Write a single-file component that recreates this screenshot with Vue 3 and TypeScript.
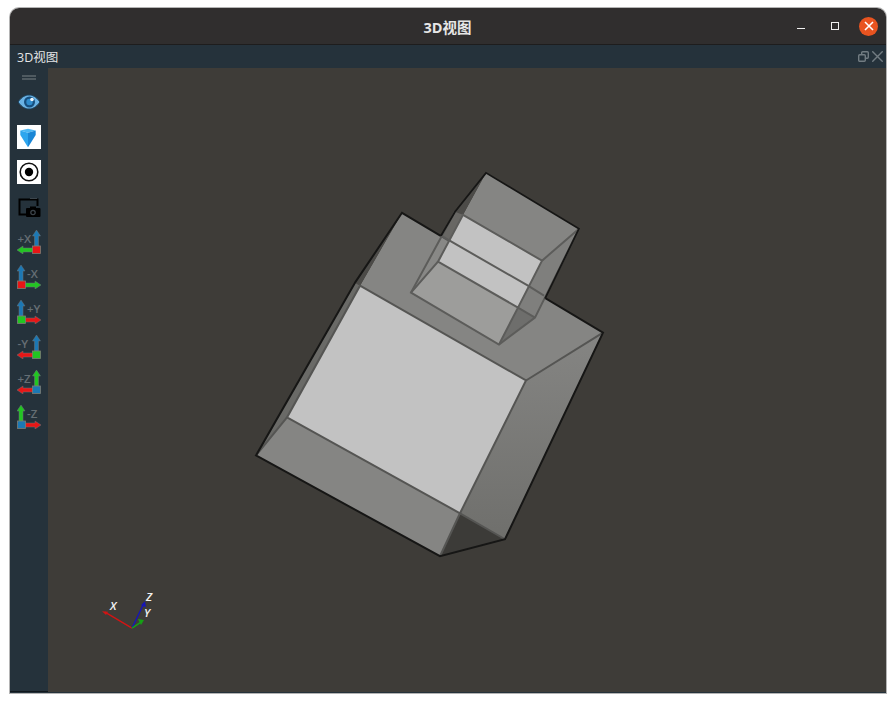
<template>
  <div class="page">
    <div class="window">
      <header class="titlebar">
        <span class="title">3D视图</span>
        <div class="win-buttons">
          <button class="win-btn"><span class="min"></span></button>
          <button class="win-btn"><span class="max"></span></button>
          <button class="win-close">
            <svg width="10" height="10" viewBox="0 0 10 10">
              <path d="M1 1L9 9M9 1L1 9" stroke="#fff" stroke-width="1.6" />
            </svg>
          </button>
        </div>
      </header>
      <div class="dock-title">
        <span>3D视图</span>
        <div class="dock-buttons">
          <svg width="11" height="11" viewBox="0 0 11 11" fill="none" stroke="#727c82" stroke-width="1.4">
            <rect x="0.7" y="3.7" width="6.6" height="6.6" rx="1" />
            <path d="M3.7 3.4V1.7a1 1 0 0 1 1-1h4.6a1 1 0 0 1 1 1v4.6a1 1 0 0 1-1 1H7.6" />
          </svg>
          <svg width="11" height="11" viewBox="0 0 11 11" stroke="#727c82" stroke-width="1.4">
            <path d="M0.3 0.3L10.7 10.7M10.7 0.3L0.3 10.7" />
          </svg>
        </div>
      </div>
      <div class="body">
        <aside class="toolbar">
          <div class="grip"></div>
          <svg class="icon" viewBox="0 0 24 24">
            <path d="M1 12C5 6.5 8.5 5 12 5s7 1.5 11 7c-4 5.500-7.500 7-11 7s-7-1.500-11-7z" fill="#6ab2e4" stroke="#1c3f58" stroke-width="1" />
            <circle cx="12.500" cy="12" r="5.500" fill="#174f7e" />
            <circle cx="12.500" cy="12" r="3.200" fill="#2f8ccd" />
            <circle cx="15" cy="9.500" r="1.800" fill="#eef5fa" />
          </svg>
          <svg class="icon white" viewBox="0 0 24 24">
            <path d="M3.300 5.500L11 3.800l7.700 1.700L11 7.800z" fill="#4cb8f4" />
            <path d="M3.300 5.500L11 7.800v14.500L3.300 10z" fill="#2ea6ee" />
            <path d="M18.700 5.500L11 7.800v14.500L18.700 10z" fill="#1a87d6" />
          </svg>
          <svg class="icon white" viewBox="0 0 24 24">
            <circle cx="12" cy="12" r="8.800" fill="none" stroke="#111" stroke-width="1.600" />
            <circle cx="12" cy="12" r="4.200" fill="#000" />
          </svg>
          <svg class="icon" viewBox="0 0 24 24">
            <path d="M9 19.500H2.500V4.500h18V11" fill="none" stroke="#000" stroke-width="2" />
            <path d="M13 3.500h7" stroke="#3c464d" stroke-width="1" />
            <rect x="9" y="13" width="14.500" height="9" rx="1" fill="#000" />
            <rect x="13" y="11.500" width="6" height="2" fill="#000" />
            <circle cx="16" cy="17.500" r="2.800" fill="#3b4349" />
            <circle cx="16" cy="17.500" r="1.500" fill="#000" />
          </svg>
          <svg v-for="v in views" :key="v.label" class="icon" viewBox="0 0 24 24">
            <text :x="v.left ? 0.500 : 10" y="12.500" class="view-label">{{ v.label }}</text>
            <path :d="upArrow(v.left ? 19.500 : 4)" :fill="v.up" stroke="#6f7678" stroke-width="0.500" />
            <path :d="v.left ? leftArrow : rightArrow" :fill="v.side" stroke="#6f7678" stroke-width="0.500" />
            <rect :x="v.left ? 15.500 : 0.500" y="16" width="8" height="7.500" :fill="v.box" stroke="#7d7d74" stroke-width="0.800" />
          </svg>
        </aside>
        <main class="viewport">
          <svg class="scene" viewBox="48 68 838 625" preserveAspectRatio="none">
            <defs>
              <linearGradient id="sideFace" x1="0" y1="0" x2="0" y2="1">
                <stop offset="0" stop-color="#858583" />
                <stop offset="1" stop-color="#6f6f6c" />
              </linearGradient>
            </defs>
            <!-- big box -->
            <polygon points="402,213 603,333 526,381 360,286" fill="#858583" />
            <polygon points="402,213 360,286 355,283" fill="#4c4b48" />
            <polygon points="355,283 360,286 287,418 256,456" fill="#6a6a67" />
            <polygon points="360,286 526,381 460,514 287,418" fill="#c2c2c2" />
            <polygon points="603,333 526,381 460,514 505,540" fill="url(#sideFace)" />
            <polygon points="287,418 460,514 440,557 256,456" fill="#858583" />
            <polygon points="460,514 505,540 440,557" fill="#3c3b38" />
            <g fill="none" stroke="#555553" stroke-width="2">
              <path d="M360,286L526,381L460,514L287,418Z" />
              <path d="M526,381L603,333M460,514L440,557M460,514L505,540M287,418L256,456" />
            </g>
            <path d="M355,283L402,213L603,333L505,540L440,557L256,456Z" fill="none" stroke="#161615" stroke-width="2" />
            <!-- small box, see-through where it crosses the big one -->
            <polygon points="463,215 542,261 518,308 438,262" fill="#c2c2c2" />
            <polygon points="486,173 579,229 542,261 463,215" fill="#858583" />
            <polygon points="455,212 486,173 463,215" fill="#4c4b48" />
            <polygon points="438,262 518,308 499,345 411,293" fill="#9d9d9b" />
            <polygon points="542,261 579,229 535,318 518,308" fill="#7f7f7d" />
            <polygon points="455,212 463,215 438,262 411,293" fill="#8a8a88" fill-opacity="0.550" />
            <polygon points="518,308 535,318 499,345" fill="#6e6e6c" />
            <g fill="none" stroke="#5c5c5a" stroke-width="2">
              <path d="M441,236L528,286L544,296" />
              <path d="M463,215L542,261L518,308L438,262Z" />
              <path d="M542,261L579,229M438,262L411,293M518,308L499,345M518,308L535,318" />
              <path d="M455,212L411,293L499,345L535,318L579,229" />
            </g>
            <path d="M441,236L455,212L486,173L579,229L545,299" fill="none" stroke="#161615" stroke-width="1.800" />
            <!-- orientation triad -->
            <path d="M132,629L105,613" stroke="#d31414" stroke-width="1.300" />
            <polygon points="102,612 108,612.500 106,616" fill="#d31414" />
            <path d="M132,629L144,604" stroke="#1616b8" stroke-width="1.300" />
            <polygon points="145,602 146,608 141,606" fill="#1616b8" />
            <path d="M132,629L141,623" stroke="#15a015" stroke-width="1.500" />
            <polygon points="144,621 138,620 141,626" fill="#15a015" />
            <text x="110" y="611" class="axis">X</text>
            <text x="146" y="602" class="axis">Z</text>
            <text x="144" y="618" class="axis">Y</text>
          </svg>
        </main>
      </div>
    </div>
  </div>
</template>

<script setup lang="ts">
interface ViewIcon {
  label: string
  left: boolean
  up: string
  side: string
  box: string
}

const RED = "#e81616"
const GREEN = "#22c522"
const BLUE = "#1c78b4"

const views: ViewIcon[] = [
  { label: "+X", left: true, up: BLUE, side: GREEN, box: RED },
  { label: "-X", left: false, up: BLUE, side: GREEN, box: RED },
  { label: "+Y", left: false, up: BLUE, side: RED, box: GREEN },
  { label: "-Y", left: true, up: BLUE, side: RED, box: GREEN },
  { label: "+Z", left: true, up: GREEN, side: RED, box: BLUE },
  { label: "-Z", left: false, up: GREEN, side: RED, box: BLUE },
]

const upArrow = (x: number) =>
  `M${x - 2} 16V6H${x - 4}L${x} 0L${x + 4} 6H${x + 2}V16Z`

const leftArrow = "M15.500 18H6V16L0 20L6 24V22H15.500Z"
const rightArrow = "M8.500 18H18V16L24 20L18 24V22H8.500Z"
</script>

<style>
html,
body {
  margin: 0;
  background: #fff;
}
</style>

<style scoped>
.page {
  width: 896px;
  height: 703px;
  padding: 8px 10px 10px;
  box-sizing: border-box;
  overflow: hidden;
}
.window {
  height: 100%;
  display: flex;
  flex-direction: column;
  border-radius: 9px 9px 0 0;
  overflow: hidden;
  box-shadow: 0 0 0 1px #b4b4b4;
  font-family: "Open Sans", "Noto Sans CJK SC", sans-serif;
}
.titlebar {
  height: 37px;
  flex: none;
  position: relative;
  display: flex;
  align-items: center;
  justify-content: center;
  background: #302e2e;
  border-bottom: 1px solid #1e1d1d;
  box-sizing: border-box;
}
.title {
  color: #e6e6e6;
  font-size: 14.500px;
  font-weight: 700;
  margin-right: 1px;
}
.win-buttons {
  position: absolute;
  right: 8px;
  top: 8px;
  display: flex;
  align-items: center;
  gap: 10px;
}
.win-btn {
  width: 24px;
  height: 20px;
  padding: 0;
  border: none;
  background: none;
  display: flex;
  align-items: center;
  justify-content: center;
}
.min {
  width: 8px;
  height: 1px;
  margin-top: 5px;
  background: #f0f0f0;
}
.max {
  width: 6px;
  height: 6px;
  border: 1px solid #f0f0f0;
}
.win-close {
  width: 19px;
  height: 19px;
  margin-left: 2px;
  padding: 0;
  border: none;
  border-radius: 50%;
  background: #e95420;
  display: flex;
  align-items: center;
  justify-content: center;
}
.dock-title {
  height: 23px;
  flex: none;
  display: flex;
  align-items: center;
  justify-content: space-between;
  padding: 0 3px 0 7px;
  background: #25323b;
  color: #e4e6e7;
  font-size: 12.500px;
}
.dock-buttons {
  display: flex;
  gap: 3px;
}
.dock-buttons svg {
  display: block;
}
.body {
  flex: 1;
  min-height: 0;
  display: flex;
  border-bottom: 1px solid #25323b;
}
.toolbar {
  width: 38px;
  flex: none;
  display: flex;
  flex-direction: column;
  align-items: center;
  gap: 11px;
  padding-top: 7px;
  box-sizing: border-box;
  background: #25323b;
  border-bottom: 1px solid #10171c;
}
.grip {
  width: 14px;
  height: 1px;
  margin-bottom: -1px;
  border-top: 2px solid #4f5a60;
  border-bottom: 2px solid #4f5a60;
}
.icon {
  width: 24px;
  height: 24px;
  flex: none;
  display: block;
}
.icon.white {
  background: #fff;
}
.view-label {
  font-family: "Open Sans", sans-serif;
  font-size: 11.500px;
  font-weight: 600;
  fill: #656e74;
}
.viewport {
  flex: 1;
  min-width: 0;
  background: #3e3c38;
}
.scene {
  display: block;
  width: 100%;
  height: 100%;
}
.axis {
  font-family: "Open Sans", sans-serif;
  font-size: 11.500px;
  font-style: italic;
  font-weight: 600;
  fill: #f2f2f2;
}
</style>
